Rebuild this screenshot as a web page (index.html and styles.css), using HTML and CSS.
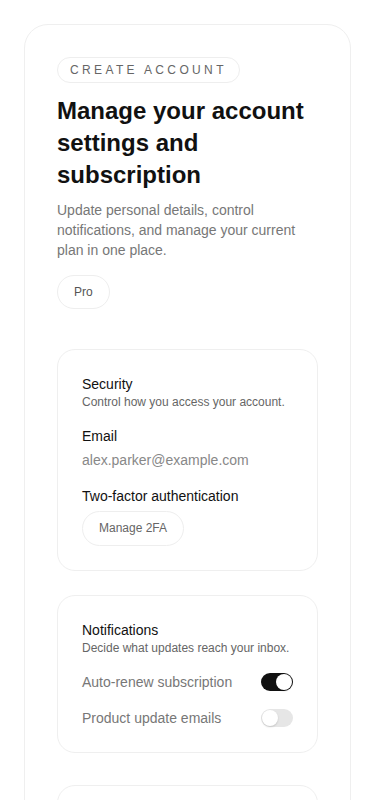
FILE: index.html
```html
<!DOCTYPE html>
<html lang="en">
<head>
  <meta charset="UTF-8">
  <title>Account settings</title>
  <link rel="stylesheet" href="styles.css">
</head>
<body>

  <div class="shell">
    <div class="intro">
      <span class="eyebrow">Create account</span>
      <h1>Manage your account settings and subscription</h1>
      <p class="lead">Update personal details, control notifications, and manage your current plan in one place.</p>
      <span class="plan">Pro</span>
    </div>

    <div class="panel panel-security">
      <div class="panel-title">Security</div>
      <div class="panel-desc">Control how you access your account.</div>

      <div class="field">
        <div class="field-label">Email</div>
        <div class="field-value">alex.parker@example.com</div>
      </div>

      <div class="field">
        <div class="field-label">Two-factor authentication</div>
        <button class="ghost-btn">Manage 2FA</button>
      </div>
    </div>

    <div class="panel panel-notify">
      <div class="panel-title">Notifications</div>
      <div class="panel-desc">Decide what updates reach your inbox.</div>

      <div class="toggles">
        <div class="toggle-row">
          <span>Auto-renew subscription</span>
          <span class="switch on"></span>
        </div>
        <div class="toggle-row">
          <span>Product update emails</span>
          <span class="switch"></span>
        </div>
      </div>
    </div>

    <div class="panel panel-billing"></div>
  </div>

</body>
</html>
```

FILE: styles.css
```css
body {
  margin: 0;
  padding: 24px;
  background: #fff;
  font-family: "Liberation Sans", Arial, sans-serif;
  color: #111;
}
.shell {
  border: 1px solid #efefef;
  border-radius: 24px;
  padding: 32px 32px 40px;
  background: #fff;
}
.intro {
  display: flex;
  flex-direction: column;
  align-items: flex-start;
}
.eyebrow {
  display: inline-block;
  border: 1px solid #eee;
  border-radius: 999px;
  padding: 4px 12px;
  font-size: 12px;
  line-height: 16px;
  letter-spacing: 0.28em;
  text-transform: uppercase;
  color: #666;
}
h1 {
  margin: 12px 0 0;
  font-size: 24px;
  line-height: 32px;
  font-weight: bold;
  color: #111;
}
.lead {
  margin: 9px 0 0;
  font-size: 14px;
  line-height: 20px;
  color: #777;
}
.plan {
  margin-top: 15px;
  border: 1px solid #eee;
  border-radius: 999px;
  padding: 8px 16px;
  font-size: 12px;
  line-height: 16px;
  color: #555;
}
.panel {
  border: 1px solid #efefef;
  border-radius: 18px;
  padding: 24px;
  margin-top: 40px;
}
.panel-notify {
  margin-top: 24px;
}
.panel-billing {
  margin-top: 32px;
  min-height: 120px;
}
.panel-title {
  font-size: 14px;
  line-height: 20px;
  color: #111;
}
.panel-desc {
  font-size: 12px;
  line-height: 16px;
  color: #666;
}
.field {
  margin-top: 16px;
}
.field-label {
  font-size: 14px;
  line-height: 20px;
  color: #111;
}
.field-value {
  margin-top: 4px;
  font-size: 14px;
  line-height: 20px;
  color: #888;
}
.ghost-btn {
  margin-top: 5px;
  background: #fff;
  border: 1px solid #eee;
  border-radius: 999px;
  padding: 9px 16px;
  font-family: inherit;
  font-size: 12px;
  line-height: 15px;
  color: #666;
  cursor: pointer;
}
.toggles {
  margin-top: 16px;
  display: flex;
  flex-direction: column;
  gap: 16px;
}
.toggle-row {
  display: flex;
  justify-content: space-between;
  align-items: center;
  height: 20px;
  font-size: 14px;
  color: #777;
}
.switch {
  position: relative;
  width: 32px;
  height: 18px;
  border-radius: 999px;
  background: #e6e6e6;
}
.switch::after {
  content: "";
  position: absolute;
  top: 1px;
  left: 1px;
  width: 16px;
  height: 16px;
  border-radius: 50%;
  background: #fff;
  box-shadow: 0 1px 2px rgba(0, 0, 0, 0.15);
}
.switch.on {
  background: #111;
}
.switch.on::after {
  left: 15px;
}
```
